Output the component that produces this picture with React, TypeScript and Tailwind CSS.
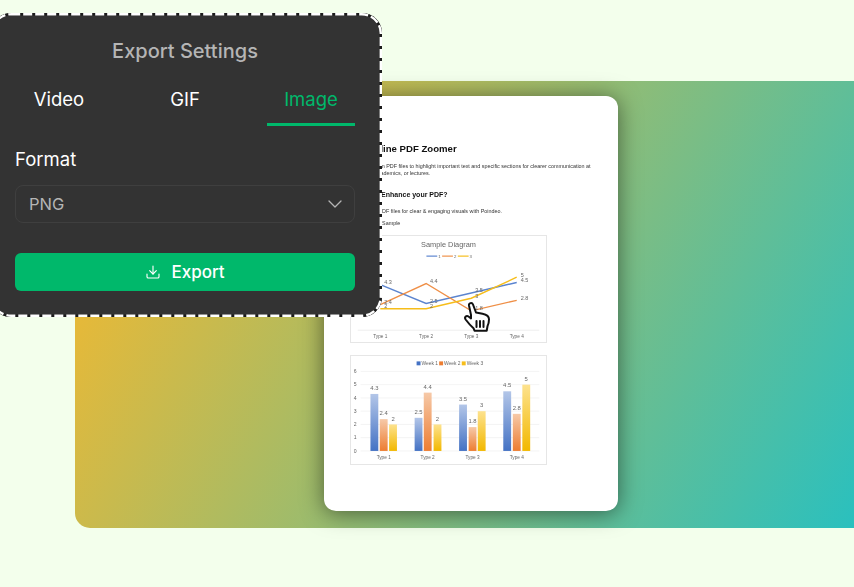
import { ChevronDown, Download } from "lucide-react"

const lineX = [29, 75.7, 121.7, 168]
const lineSeries = [
  { color: "#5b84cf", values: [4.3, 2.5, 3.5, 4.5] },
  { color: "#ef8f47", values: [2.4, 4.4, 1.8, 2.8] },
  { color: "#f6bd1a", values: [2, 2, 3, 5] },
]
const lineY = (v: number) => 95.5 - 10.7 * v

const barGroups = [
  { label: "Type 1", x: [19, 28.5, 38], values: [4.3, 2.4, 2] },
  { label: "Type 2", x: [64, 73.3, 83.3], values: [2.5, 4.4, 2] },
  { label: "Type 3", x: [109.3, 119, 128.3], values: [3.5, 1.8, 3] },
  { label: "Type 4", x: [154.3, 164, 173.7], values: [4.5, 2.8, 5] },
]
const barFills = ["url(#barBlue)", "url(#barOrange)", "url(#barYellow)"]
const barY = (v: number) => 96.7 - 13.5 * v

function LineChart() {
  return (
    <svg width="197" height="108" viewBox="0 0 197 108" className="block border border-[#e6e6e6] bg-white">
      <text x="98.5" y="11" textAnchor="middle" fontSize="7.5" fill="#666">Sample Diagram</text>
      <line x1="76" y1="20.5" x2="87" y2="20.5" stroke="#5b84cf" strokeWidth="1.2" />
      <line x1="92" y1="20.5" x2="103" y2="20.5" stroke="#ef8f47" strokeWidth="1.2" />
      <line x1="108" y1="20.5" x2="119" y2="20.5" stroke="#f6bd1a" strokeWidth="1.2" />
      <text x="88" y="22.2" fontSize="4.4" fill="#666">1</text>
      <text x="104" y="22.2" fontSize="4.4" fill="#666">2</text>
      <text x="120" y="22.2" fontSize="4.4" fill="#666">3</text>
      <line x1="6" y1="96" x2="191" y2="96" stroke="#eeeeee" />
      {lineSeries.map((s) => (
        <polyline
          key={s.color}
          points={s.values.map((v, i) => `${lineX[i]},${lineY(v)}`).join(" ")}
          fill="none"
          stroke={s.color}
          strokeWidth="1.4"
        />
      ))}
      {lineSeries.map((s) =>
        s.values.map((v, i) => (
          <text key={s.color + i} x={lineX[i] + 4} y={lineY(v) - 0.5} fontSize="5.6" fill="#666">{v}</text>
        ))
      )}
      {lineX.map((x, i) => (
        <text key={x} x={x} y="104" textAnchor="middle" fontSize="4.8" fill="#666">Type {i + 1}</text>
      ))}
    </svg>
  )
}

function BarChart() {
  return (
    <svg width="197" height="110" viewBox="0 0 197 110" className="block border border-[#e6e6e6] bg-white">
      <defs>
        <linearGradient id="barBlue" x1="0" y1="0" x2="0" y2="1">
          <stop offset="0" stopColor="#b3c6e8" />
          <stop offset="1" stopColor="#4472c4" />
        </linearGradient>
        <linearGradient id="barOrange" x1="0" y1="0" x2="0" y2="1">
          <stop offset="0" stopColor="#f6c9a8" />
          <stop offset="1" stopColor="#ed7d31" />
        </linearGradient>
        <linearGradient id="barYellow" x1="0" y1="0" x2="0" y2="1">
          <stop offset="0" stopColor="#fde28e" />
          <stop offset="1" stopColor="#f2b800" />
        </linearGradient>
      </defs>
      <rect x="66" y="5.5" width="4" height="4" fill="#4472c4" />
      <text x="71" y="9.5" fontSize="5" fill="#666">Week 1</text>
      <rect x="89" y="5.5" width="4" height="4" fill="#ed7d31" />
      <text x="94" y="9.5" fontSize="5" fill="#666">Week 2</text>
      <rect x="112" y="5.5" width="4" height="4" fill="#f6bd1a" />
      <text x="117" y="9.5" fontSize="5" fill="#666">Week 3</text>
      {[0, 1, 2, 3, 4, 5, 6].map((v) => (
        <g key={v}>
          <line x1="9" y1={barY(v)} x2="191" y2={barY(v)} stroke="#efefef" strokeWidth="0.7" />
          <text x="2" y={barY(v) + 1.7} fontSize="5.2" fill="#666">{v}</text>
        </g>
      ))}
      {barGroups.map((g) => (
        <g key={g.label}>
          {g.values.map((v, i) => (
            <g key={i}>
              <rect x={g.x[i]} y={barY(v)} width="8" height={13.5 * v} fill={barFills[i]} />
              <text x={g.x[i] + 4} y={barY(v) - 4} textAnchor="middle" fontSize="6" fill="#666">{v}</text>
            </g>
          ))}
          <text x={g.x[1] + 4} y="105" textAnchor="middle" fontSize="4.8" fill="#666">{g.label}</text>
        </g>
      ))}
    </svg>
  )
}

function HandCursor() {
  return (
    <svg
      width="28"
      height="32"
      viewBox="0 0 28 32"
      className="absolute left-[139px] top-[205px]"
      fill="#fff"
      stroke="#111"
      strokeWidth="2"
      strokeLinejoin="round"
      strokeLinecap="round"
    >
      <path d="M8 14 6 4.500C5.600 2 9 1 10 3.500l3 8 6.500 1.200c4 .8 6.500 2 6.500 5.500 0 3-.6 5-1.500 7l-.8 4.500H11.500l-1-2.500C8 25 4.500 21 2.600 18.500 1 16.200 3.500 14 5.500 15.500L8 17.500Z" />
      <path d="M13.500 20v6M17 20v6M20.500 20v6" fill="none" />
    </svg>
  )
}

function PaperDoc() {
  return (
    <div className="relative w-[294px] h-[415px] shrink-0 rounded-xl bg-white shadow-[0_2px_22px_rgba(0,0,0,0.5)]">
      <div className="pl-[26px] pt-[47px] text-[#333] font-['Liberation_Sans',sans-serif] blur-[0.35px]">
        <h2 className="text-[9.6px] leading-3 font-bold text-[#111]">Try Online PDF Zoomer</h2>
        <p className="mt-[8px] text-[5.4px] leading-[7.4px] whitespace-nowrap">
          Easily zoom in PDF files to highlight important text and specific sections for clearer communication at
          <br />
          meetings, academics, or lectures.
        </p>
        <h3 className="mt-[12px] text-[7px] leading-[10px] font-bold text-[#111]">How do I Enhance your PDF?</h3>
        <p className="mt-[8px] text-[5.4px] leading-[7px]">Zoom in on PDF files for clear &amp; engaging visuals with Poindeo.</p>
        <p className="mt-[5px] text-[5.4px] leading-[7px]">See Zoom in Sample</p>
        <div className="mt-[8px]">
          <LineChart />
        </div>
        <div className="mt-[12px]">
          <BarChart />
        </div>
      </div>
      <HandCursor />
    </div>
  )
}

function ExportPanel() {
  return (
    <div className="absolute left-[-9px] top-[13px] w-[391px] h-[304px] rounded-[20px] bg-[#333333] pl-[24px] pr-[27px] font-['Inter',sans-serif]">
      <svg width="391" height="304" className="absolute left-0 top-0" fill="none">
        <rect x="1.2" y="1.2" width="388.6" height="301.6" rx="19" stroke="#1c1c1c" strokeWidth="2.4" />
        <rect x="1.2" y="1.2" width="388.6" height="301.6" rx="19" stroke="#ffffff" strokeWidth="2.4" strokeDasharray="9 3" />
      </svg>
      <div className="pt-[24px] text-center text-[20px] leading-7 font-medium text-[#b5b5b5]">Export Settings</div>
      <div className="mt-[22px] flex justify-between text-[18.5px] leading-6">
        <div className="w-[88px] text-center text-white">Video</div>
        <div className="w-[88px] text-center text-white">GIF</div>
        <div className="w-[88px] h-[39px] text-center text-[#00b86b] border-b-[3px] border-[#00b86b]">Image</div>
      </div>
      <div className="mt-[21px] text-[18.5px] leading-6 text-white">Format</div>
      <div className="mt-[14px] h-[38px] flex items-center justify-between rounded-lg border border-[#3f3f3f] pl-[13px] pr-[7px] text-[16.5px] text-[#b5b5b5]">
        <span>PNG</span>
        <ChevronDown size={24} strokeWidth={1.3} />
      </div>
      <button className="mt-[30px] w-full h-[38px] flex items-center justify-center gap-[10px] rounded-md bg-[#00b86b] text-[17px] font-medium text-white">
        <Download size={16} strokeWidth={1.7} />
        <span className="mt-[1px]">Export</span>
      </button>
    </div>
  )
}

export default function App() {
  return (
    <div className="relative w-[854px] h-[587px] overflow-hidden bg-[#f3ffec] pl-[75px] pt-[81px]">
      <div className="flex h-[447px] rounded-bl-[15px] bg-[linear-gradient(120deg,#e4b93a_14%,#2ac0be)] pl-[249px] pt-[15px]">
        <PaperDoc />
      </div>
      <ExportPanel />
    </div>
  )
}
